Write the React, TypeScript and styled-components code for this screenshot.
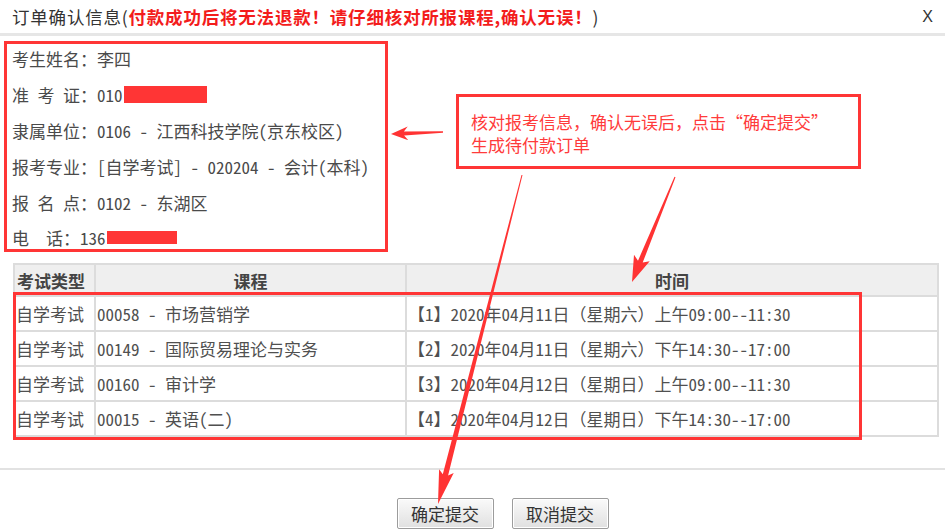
import styled, { createGlobalStyle } from "styled-components";

const GlobalStyle = createGlobalStyle`
  html, body {
    margin: 0;
    padding: 0;
    background: #fff;
  }
`;

const RED = "#ff3535";

const Page = styled.div`
  position: relative;
  width: 945px;
  height: 532px;
  overflow: hidden;
  background: #fff;
  color: #4a4a4a;
  font-family: "Noto Sans CJK SC", "Liberation Sans", sans-serif;
`;

const Header = styled.div`
  display: flex;
  align-items: center;
  justify-content: space-between;
  height: 33px;
  padding: 0 12px 0 12px;
  border-bottom: 3px solid #e6e6e6;
`;

const Title = styled.div`
  font-size: 17.5px;
  letter-spacing: 0.8px;
  color: #333;
  white-space: nowrap;
`;

const Warn = styled.span`
  color: #f31c1c;
  font-weight: bold;
`;

const Close = styled.span`
  font-family: "Liberation Sans", sans-serif;
  font-size: 16px;
  color: #333;
`;

const Body = styled.div`
  padding: 5px 0 0 4px;
`;

// half-width latin, like the SimSun look of the original form
const Narrow = styled.div`
  font-feature-settings: "hwid" 1;
`;

const Wide = styled.span`
  font-feature-settings: normal;
`;

const InfoBox = styled(Narrow)`
  box-sizing: border-box;
  width: 384px;
  height: 211px;
  border: 3px solid ${RED};
  padding: 0 0 0 5px;
  overflow: hidden;

  & > :first-child {
    margin-top: -3px;
  }
`;

const InfoRow = styled.div`
  height: 35.8px;
  font-size: 17px;
  white-space: pre;
  display: flex;
  align-items: center;
`;

const Hidden = styled.span<{ $w: number; $h: number }>`
  display: inline-block;
  width: ${(p) => p.$w}px;
  height: ${(p) => p.$h}px;
  background: ${RED};
  margin-left: 1px;
`;

const TableWrap = styled(Narrow)`
  position: relative;
  width: 926px;
  margin: 11px 0 0 9px;
`;

const Table = styled.table`
  width: 100%;
  border-collapse: collapse;
  table-layout: fixed;
  font-size: 17px;
  border: 2px solid #dcdcdc;
`;

const Th = styled.th<{ $align?: string }>`
  height: 30px;
  padding: 0 2px;
  background: #efefef;
  border: 2px solid #dcdcdc;
  font-weight: bold;
  color: #444;
  text-align: ${(p) => p.$align || "center"};
`;

const Td = styled.td`
  height: 33px;
  padding: 0 1px;
  border: 2px solid #dcdcdc;
  white-space: nowrap;
  color: #505050;
`;

const RowMark = styled.div`
  position: absolute;
  left: 0;
  top: 29px;
  width: 849px;
  height: 148px;
  box-sizing: border-box;
  border: 3px solid ${RED};
  pointer-events: none;
`;

const Footer = styled.div`
  position: absolute;
  left: 0;
  right: 0;
  bottom: 0;
  height: 64px;
  border-top: 2px solid #e2e2e2;
  display: flex;
  justify-content: center;
  gap: 18px;
  padding: 28px 0 0 60px;
  box-sizing: border-box;
`;

const Button = styled.button`
  width: 97px;
  height: 31px;
  border: 1px solid #9c9c9c;
  border-radius: 2px;
  background: linear-gradient(#fafafa, #e0e0e0);
  box-shadow: inset 0 0 0 1px #fff;
  font-family: "Noto Sans CJK SC", sans-serif;
  font-size: 17px;
  color: #333;
  padding: 0;
`;

const Note = styled.div`
  position: absolute;
  left: 456px;
  top: 94px;
  width: 405px;
  height: 75px;
  box-sizing: border-box;
  border: 3px solid ${RED};
  padding: 13px 0 0 12px;
  color: #ff3b3b;
  font-size: 17px;
  line-height: 23px;
  white-space: nowrap;
`;

const Marks = styled.svg`
  position: absolute;
  left: 0;
  top: 0;
  pointer-events: none;
`;

type Pt = [number, number];

function arrow(tail: Pt, tip: Pt, tailW: number, neckW: number, headLen: number, headW: number) {
  const dx = tip[0] - tail[0];
  const dy = tip[1] - tail[1];
  const len = Math.hypot(dx, dy);
  const ux = dx / len;
  const uy = dy / len;
  const nx = -uy;
  const ny = ux;
  const neck: Pt = [tip[0] - ux * headLen, tip[1] - uy * headLen];
  const barb: Pt = [tip[0] - ux * (headLen + 4), tip[1] - uy * (headLen + 4)];
  const p = (b: Pt, w: number, s: number) =>
    `${(b[0] + (nx * w * s) / 2).toFixed(1)},${(b[1] + (ny * w * s) / 2).toFixed(1)}`;
  return [
    p(tail, tailW, 1),
    p(neck, neckW, 1),
    p(barb, headW, 1),
    `${tip[0]},${tip[1]}`,
    p(barb, headW, -1),
    p(neck, neckW, -1),
    p(tail, tailW, -1),
  ].join(" ");
}

const courses = [
  { type: "自学考试", name: "00058 - 市场营销学", date: "【1】2020年04月11日", day: "（星期六）", slot: "上午09:00--11:30" },
  { type: "自学考试", name: "00149 - 国际贸易理论与实务", date: "【2】2020年04月11日", day: "（星期六）", slot: "下午14:30--17:00" },
  { type: "自学考试", name: "00160 - 审计学", date: "【3】2020年04月12日", day: "（星期日）", slot: "上午09:00--11:30" },
  { type: "自学考试", name: "00015 - 英语(二)", date: "【4】2020年04月12日", day: "（星期日）", slot: "下午14:30--17:00" },
];

export default function App() {
  return (
    <Page>
      <GlobalStyle />
      <Header>
        <Title>
          订单确认信息(<Warn>付款成功后将无法退款！请仔细核对所报课程,确认无误！</Warn>)
        </Title>
        <Close>X</Close>
      </Header>

      <Body>
        <InfoBox>
          <InfoRow>考生姓名：李四</InfoRow>
          <InfoRow>
            准{"\u2002"}考{"\u2002"}证：010
            <Hidden $w={83} $h={17} />
          </InfoRow>
          <InfoRow>隶属单位：0106 - 江西科技学院(京东校区)</InfoRow>
          <InfoRow>报考专业：[自学考试] - 020204 - 会计(本科)</InfoRow>
          <InfoRow>
            报{"\u2002"}名{"\u2002"}点：0102 - 东湖区
          </InfoRow>
          <InfoRow>
            电<Wide>{"\u3000"}</Wide>话：136
            <Hidden $w={70} $h={13} />
          </InfoRow>
        </InfoBox>

        <TableWrap>
          <Table>
            <colgroup>
              <col style={{ width: 81 }} />
              <col style={{ width: 311 }} />
              <col />
            </colgroup>
            <thead>
              <tr>
                <Th $align="left">考试类型</Th>
                <Th>课程</Th>
                <Th>时间</Th>
              </tr>
            </thead>
            <tbody>
              {courses.map((c, i) => (
                <tr key={i}>
                  <Td>{c.type}</Td>
                  <Td>{c.name}</Td>
                  <Td>
                    {c.date}
                    <Wide>{c.day}</Wide>
                    {c.slot}
                  </Td>
                </tr>
              ))}
            </tbody>
          </Table>
          <RowMark />
        </TableWrap>
      </Body>

      <Footer>
        <Button>确定提交</Button>
        <Button>取消提交</Button>
      </Footer>

      <Note>
        核对报考信息，确认无误后，点击“确定提交”
        <br />
        生成待付款订单
      </Note>

      <Marks width="945" height="532" viewBox="0 0 945 532">
        <polygon fill="#ff3333" points={arrow([443, 132], [391, 134], 1.5, 4, 13, 14)} />
        <polygon fill="#ff3333" points={arrow([675, 177], [632, 282], 1, 5, 22, 17)} />
        <polygon fill="#ff3333" points={arrow([522, 175], [438, 504], 1, 5.5, 30, 15)} />
      </Marks>
    </Page>
  );
}
